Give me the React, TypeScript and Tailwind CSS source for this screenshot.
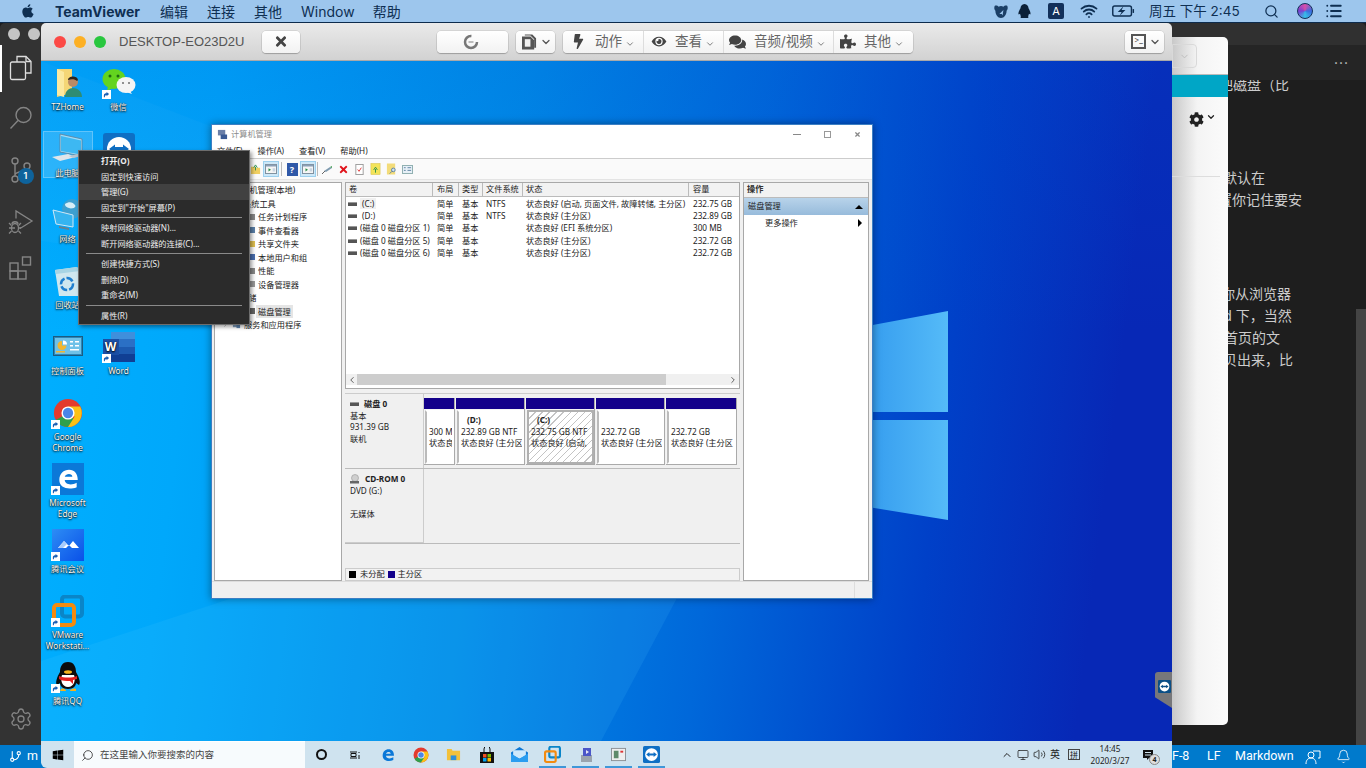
import React from 'react';
import { ChevronDown, ChevronUp, Search, Wifi, List, Bell, GitBranch, ChevronLeft, ChevronRight, Volume2, Monitor, Settings } from 'lucide-react';
import { FaBolt, FaEye, FaComments, FaPuzzlePiece, FaCog, FaTimes, FaWindows } from 'react-icons/fa';

const Shortcut = () => (
    <span className="absolute left-0 bottom-0 w-[9px] h-[9px] bg-white flex items-center justify-center">
        <svg viewBox="0 0 8 8" className="w-[7px] h-[7px]"><path d="M1 7V4.5C1 3 2.5 2.5 4 2.5V1l3 2.5L4 6V4.5C3 4.5 2.5 5 2 7Z" fill="#1a5fb4" /></svg>
    </span>
);

const FolderPerson = () => (
    <svg viewBox="0 0 32 32" className="w-[32px] h-[32px]">
        <path d="M5 2h15v24L5 30Z" fill="#f4d676" />
        <path d="M5 2l7 3v25l-7-2Z" fill="#fbe9a0" />
        <circle cx="21" cy="15" r="5" fill="#b98a66" />
        <path d="M16 13c0-4 9-5 10 0l-1 1c-2-2-6-2-9-1Z" fill="#2c2620" />
        <path d="M13 30c0-6 4-9 8-9s9 3 9 9Z" fill="#2f8c72" />
    </svg>
);

const Wechat = () => (
    <svg viewBox="0 0 34 32" className="w-[34px] h-[32px]">
        <ellipse cx="12" cy="12" rx="11.5" ry="10" fill="#63d41f" />
        <path d="M6 19l-1 5 6-3Z" fill="#63d41f" />
        <circle cx="8" cy="9" r="1.5" fill="#1f6b10" /><circle cx="16" cy="9" r="1.5" fill="#1f6b10" />
        <ellipse cx="24" cy="18" rx="9.5" ry="8" fill="#f4f4f4" />
        <path d="M28 24l2 3-6-2Z" fill="#f4f4f4" />
        <circle cx="21" cy="16" r="1.1" fill="#777" /><circle cx="27" cy="16" r="1.1" fill="#777" />
    </svg>
);

const ThisPc = () => (
    <svg viewBox="0 0 34 32" className="w-[34px] h-[32px]">
        <path d="M9 1l22 5v17L9 19Z" fill="#9fdcf8" stroke="#5f7f98" strokeWidth=".8" />
        <path d="M10 3l20 4.500v14L10 18Z" fill="#3db8f2" />
        <path d="M1 24l16-3 8 3-16 4Z" fill="#dfe5ea" />
        <path d="M18 23l9-2 4 2-9 2Z" fill="#b8c4ce" />
    </svg>
);

const TeamviewerLogo = ({ size = 'w-[32px] h-[32px]', bg = '#0e6fc4' }: { size?: string; bg?: string }) => (
    <svg viewBox="0 0 32 32" className={size}>
        <rect width="32" height="32" rx="3" fill={bg} />
        <circle cx="16" cy="16" r="12" fill="#fff" />
        <path d="M6 16l6-4.500V14h8v-2.500l6 4.500-6 4.500V18h-8v2.500Z" fill={bg} />
    </svg>
);

const NetworkIcon = () => (
    <svg viewBox="0 0 32 32" className="w-[32px] h-[32px]">
        <circle cx="20" cy="10" r="10" fill="#3d9fd0" />
        <path d="M13 5c4-3 8-2 10 1s-4 4-6 3-4-1-4-4Z" fill="#d6eef8" />
        <path d="M1 11l20 5v12L4 25Z" fill="#35b4f0" stroke="#cfe7f5" strokeWidth="1" />
        <path d="M7 27l10 2v2L7 29Z" fill="#67808f" />
    </svg>
);

const RecycleBin = () => (
    <svg viewBox="0 0 32 32" className="w-[32px] h-[32px]">
        <path d="M3 5l22-3 3 4-2 25H7Z" fill="#cfe7ef" />
        <path d="M3 5l22-3 3 4-24 3Z" fill="#a7d4e4" />
        <circle cx="15" cy="19" r="6" fill="none" stroke="#1f7fcf" strokeWidth="2.500" strokeDasharray="7 2" />
    </svg>
);

const ControlPanel = () => (
    <svg viewBox="0 0 30 22" className="w-[30px] h-[22px]">
        <rect x=".5" y=".5" width="29" height="19" fill="#2d87b8" stroke="#1c5b80" />
        <rect x="2" y="2" width="26" height="16" fill="#6ec1e8" />
        <path d="M9 5a4.500 4.500 0 1 0 4.500 4.500H9Z" fill="#f2b62f" />
        <path d="M10 4.500a4 4 0 0 1 4 4h-4Z" fill="#fff" />
        <path d="M17 5h3v1.500h-3ZM22 5h4v1.500h-4ZM17 9h3v1.500h-3ZM22 9h4v1.500h-4ZM17 13h9v1.500h-9Z" fill="#fff" />
        <path d="M3 15h9v1.500H3Z" fill="#f2b62f" />
    </svg>
);

const WordIcon = () => (
    <span className="relative w-[32px] h-[30px] block">
        <span className="absolute right-0 top-0 w-[24px] h-[30px] flex flex-col">
            <span className="flex-1 bg-[#3f8fdc]" /><span className="flex-1 bg-[#2b70c5]" /><span className="flex-1 bg-[#1d5ab0]" /><span className="flex-1 bg-[#103f94]" />
        </span>
        <span className="absolute left-0 top-[7px] w-[16px] h-[16px] bg-[#1a4fa5] text-white text-[12px] leading-[16px] font-bold text-center">W</span>
    </span>
);

const ChromeLogo = ({ size = 'w-[30px] h-[30px]' }: { size?: string }) => (
    <svg viewBox="0 0 32 32" className={size}>
        <circle cx="16" cy="16" r="15" fill="#e33b2e" />
        <path d="M16 16L3 23.500A15 15 0 0 0 16 31l7-7.500Z" fill="#2fa04c" />
        <path d="M16 9h13a15 15 0 0 1-13 22l7-11Z" fill="#fbc117" />
        <circle cx="16" cy="16" r="7" fill="#fff" />
        <circle cx="16" cy="16" r="5.500" fill="#4a86e8" />
    </svg>
);

const EdgeLogo = ({ color = '#fff' }: { color?: string }) => (
    <svg viewBox="0 0 24 24" className="w-full h-full">
        <path d="M4 13C4 7 8 3.500 13 3.500c5 0 8 3.500 8 9.500H9c0 4 6 5.500 11 2.500v4c-7 3-16 1-16-6.500Zm5-3h7c0-3.500-6-3.500-7 0Z" fill={color} />
    </svg>
);

const MeetingIcon = () => (
    <span className="relative block w-[32px] h-[32px] bg-[linear-gradient(135deg,#2d8df5,#0a50e8)]">
        <svg viewBox="0 0 32 32" className="w-full h-full">
            <path d="M6 19l6-7 5 5 4-5 6 7h-7l-3-3-3 3Z" fill="#fff" />
            <path d="M6 19l6-7 3 3-4 4Z" fill="#a9ccfb" />
        </svg>
    </span>
);

const VmwareIcon = () => (
    <svg viewBox="0 0 32 32" className="w-[32px] h-[32px]">
        <rect x="10" y="1.500" width="20" height="20" rx="3" fill="none" stroke="#0a85c8" strokeWidth="4" />
        <rect x="2" y="10" width="20" height="20" rx="3" fill="none" stroke="#f38b0f" strokeWidth="4" />
    </svg>
);

const QqIcon = () => (
    <svg viewBox="0 0 32 32" className="w-[32px] h-[32px]">
        <path d="M16 1c6 0 8 5 8 10 3 5 5 11 3 13l-3-2c0 3-3 6-8 6s-8-3-8-6l-3 2c-2-2 0-8 3-13C8 6 10 1 16 1Z" fill="#0c0c0c" />
        <path d="M10 14h12c2 5 0 12-6 12s-8-7-6-12Z" fill="#fff" />
        <ellipse cx="16" cy="11" rx="4" ry="1.800" fill="#f7b21b" />
        <path d="M7 15c5 2 13 2 18 0v3l-4 1v4l-3-3c-4 0-8 0-11-2Z" fill="#e21f1f" />
        <path d="M9 28c2-1 5 0 5 2H8ZM18 30c0-2 4-3 6-2v2Z" fill="#f7b21b" />
    </svg>
);

const desktopIcons = [
    { label: ['TZHome'], cell: 'col-start-1 row-start-1', icon: <FolderPerson /> },
    { label: ['微信'], cell: 'col-start-2 row-start-1', icon: <Wechat />, shortcut: true },
    { label: ['此电脑'], cell: 'col-start-1 row-start-2', icon: <ThisPc />, selected: true },
    { label: [], cell: 'col-start-2 row-start-2', icon: <TeamviewerLogo />, shortcut: true },
    { label: ['网络'], cell: 'col-start-1 row-start-3', icon: <NetworkIcon /> },
    { label: ['回收站'], cell: 'col-start-1 row-start-4', icon: <RecycleBin /> },
    { label: ['控制面板'], cell: 'col-start-1 row-start-5', icon: <ControlPanel /> },
    { label: ['Word'], cell: 'col-start-2 row-start-5', icon: <WordIcon />, shortcut: true },
    { label: ['Google', 'Chrome'], cell: 'col-start-1 row-start-6', icon: <ChromeLogo />, shortcut: true },
    { label: ['Microsoft', 'Edge'], cell: 'col-start-1 row-start-7', icon: <span className="block w-[32px] h-[32px] bg-[#0b78d8] p-[3px]"><EdgeLogo /></span>, shortcut: true },
    { label: ['腾讯会议'], cell: 'col-start-1 row-start-8', icon: <MeetingIcon />, shortcut: true },
    { label: ['VMware', 'Workstati...'], cell: 'col-start-1 row-start-9', icon: <VmwareIcon />, shortcut: true },
    { label: ['腾讯QQ'], cell: 'col-start-1 row-start-10', icon: <QqIcon />, shortcut: true },
];

const menuSections = [
    [{ text: '打开(O)', bold: true }, { text: '固定到快速访问' }, { text: '管理(G)', hover: true }, { text: '固定到"开始"屏幕(P)' }],
    [{ text: '映射网络驱动器(N)...' }, { text: '断开网络驱动器的连接(C)...' }],
    [{ text: '创建快捷方式(S)' }, { text: '删除(D)' }, { text: '重命名(M)' }],
    [{ text: '属性(R)' }],
];

const treeRows = [
    { text: '计算机管理(本地)', cls: 'pl-[18px]' },
    { text: '系统工具', cls: 'pl-[28px]' },
    { text: '任务计划程序', cls: 'pl-[35px]', dot: 'bg-[#888]' },
    { text: '事件查看器', cls: 'pl-[35px]', dot: 'bg-[#5a7fa8]' },
    { text: '共享文件夹', cls: 'pl-[35px]', dot: 'bg-[#e0c050]' },
    { text: '本地用户和组', cls: 'pl-[35px]', dot: 'bg-[#4a6fb0]' },
    { text: '性能', cls: 'pl-[35px]', dot: 'bg-[#888]' },
    { text: '设备管理器', cls: 'pl-[35px]', dot: 'bg-[#999]' },
    { text: '存储', cls: 'pl-[25px]' },
    { text: '磁盘管理', cls: 'pl-[35px]', dot: 'bg-[#666]', selected: true },
    { text: '服务和应用程序', cls: 'pl-[7px]', services: true },
];

const volumes = [
    { name: '(C:)', layout: '简单', type: '基本', fs: 'NTFS', status: '状态良好 (启动, 页面文件, 故障转储, 主分区)', size: '232.75 GB', indent: 'pl-[5px]', mark: true },
    { name: '(D:)', layout: '简单', type: '基本', fs: 'NTFS', status: '状态良好 (主分区)', size: '232.89 GB', indent: 'pl-[5px]' },
    { name: '(磁盘 0 磁盘分区 1)', layout: '简单', type: '基本', fs: '', status: '状态良好 (EFI 系统分区)', size: '300 MB', indent: 'pl-[3px]' },
    { name: '(磁盘 0 磁盘分区 5)', layout: '简单', type: '基本', fs: '', status: '状态良好 (主分区)', size: '232.72 GB', indent: 'pl-[3px]' },
    { name: '(磁盘 0 磁盘分区 6)', layout: '简单', type: '基本', fs: '', status: '状态良好 (主分区)', size: '232.72 GB', indent: 'pl-[3px]' },
];

const partitions = [
    { title: '', size: '300 M', status: '状态良', width: 'w-[31px]' },
    { title: '(D:)', size: '232.89 GB NTF', status: '状态良好 (主分区', width: 'w-[69px]' },
    { title: '(C:)', size: '232.75 GB NTF', status: '状态良好 (启动,', width: 'w-[69px]', active: true },
    { title: '', size: '232.72 GB', status: '状态良好 (主分区', width: 'w-[69px]' },
    { title: '', size: '232.72 GB', status: '状态良好 (主分区', width: 'w-[71px]' },
];

const VolumeGlyph = () => <span className="w-[9px] h-[4px] bg-[#555] border-t border-[#999] shrink-0" />;

const SmallBtn = ({ children, cls = '' }: { children: React.ReactNode; cls?: string }) => (
    <span className={`w-[16px] h-[16px] flex items-center justify-center shrink-0 ${cls}`}>{children}</span>
);

const PanelGlyph = () => (
    <svg viewBox="0 0 14 12" className="w-[12px] h-[10px]"><rect x=".5" y=".5" width="13" height="11" fill="#f5f5f5" stroke="#6d7f8f" /><rect x="1" y="1" width="12" height="2" fill="#8aa0b8" /><path d="M4 5v4l3-2Z" fill="#2a8f4a" /><path d="M9 5h3v4H9Z" fill="#c8d5e2" /></svg>
);

const ComputerManagement = () => (
    <div className="absolute left-[170px] top-[63px] w-[662px] h-[475px] bg-[#f0f0f0] border border-[#3c7fc4] flex flex-col text-[8.2px] text-[#222] shadow-[0_0_8px_rgba(0,0,0,0.4)] [font-family:'Noto_Sans','Noto_Sans_CJK_SC',sans-serif]">
        <div className="h-[19px] bg-white flex items-center pl-[5px] shrink-0">
            <svg viewBox="0 0 12 12" className="w-[11px] h-[11px]"><rect x="1" y="1" width="8" height="6" fill="#6a7fa8" /><rect x="4" y="6" width="7" height="5" fill="#3a5a94" /></svg>
            <span className="ml-[3px] text-[#8a8a8a]">计算机管理</span>
            <span className="ml-auto flex items-center text-[#777]">
                <span className="w-[30px] flex justify-center"><span className="w-[8px] h-px bg-[#888]" /></span>
                <span className="w-[30px] flex justify-center"><span className="w-[7px] h-[7px] border border-[#999]" /></span>
                <span className="w-[30px] flex justify-center text-[#888]"><FaTimes className="w-[7px] h-[7px]" /></span>
            </span>
        </div>
        <div className="h-[15px] bg-white flex items-center pl-[5px] gap-[15px] border-b border-[#ccc] shrink-0">
            <span>文件(F)</span><span>操作(A)</span><span>查看(V)</span><span>帮助(H)</span>
        </div>
        <div className="h-[21px] bg-[#fafafa] flex items-center pl-[4px] border-b border-[#e4e4e4] shrink-0">
            <span className="w-[31px]" />
            <SmallBtn><svg viewBox="0 0 12 12" className="w-[11px] h-[11px]"><path d="M1 3h4l1 1h5v7H1Z" fill="#f0cf62" /><path d="M6 7V3M4 4l2-3 2 3" stroke="#2a8f4a" fill="none" /></svg></SmallBtn>
            <SmallBtn cls="bg-[#cde8f8] border border-[#9cd0ee]"><PanelGlyph /></SmallBtn>
            <span className="w-px h-[14px] bg-[#bbb] mx-[2px]" />
            <SmallBtn><span className="w-[11px] h-[13px] bg-[#2f58a8] text-white text-[9px] font-bold leading-[13px] text-center">?</span></SmallBtn>
            <SmallBtn cls="bg-[#cde8f8] border border-[#9cd0ee]"><PanelGlyph /></SmallBtn>
            <span className="w-px h-[14px] bg-[#bbb] mx-[1px]" />
            <SmallBtn><svg viewBox="0 0 12 12" className="w-[12px] h-[12px]"><path d="M3 8l6-4 2 1-6 4Z" fill="#7f9bb0" /><path d="M1 11l3-3" stroke="#666" /><path d="M9 4l2-1v2Z" fill="#3a9a4a" /></svg></SmallBtn>
            <SmallBtn><FaTimes className="w-[11px] h-[11px] text-[#e0141c]" /></SmallBtn>
            <SmallBtn><svg viewBox="0 0 12 12" className="w-[11px] h-[11px]"><rect x="2" y=".5" width="8" height="11" fill="#fff" stroke="#999" /><path d="M4 6l1.500 2L8 4" stroke="#d33" fill="none" /></svg></SmallBtn>
            <SmallBtn><svg viewBox="0 0 12 12" className="w-[11px] h-[12px]"><rect x="1" width="10" height="12" fill="#f3e45a" stroke="#d4b93a" strokeWidth=".5" /><path d="M6 10V6M4 7l2-3 2 3" stroke="#2a8f4a" fill="none" /></svg></SmallBtn>
            <SmallBtn><svg viewBox="0 0 12 12" className="w-[11px] h-[12px]"><rect x="1" width="9" height="12" fill="#f3dc7a" /><circle cx="8" cy="7" r="2" fill="#cfe3f2" stroke="#5a7f9f" /><path d="M6.500 8.500L4 11" stroke="#5a7f9f" /></svg></SmallBtn>
            <SmallBtn><svg viewBox="0 0 12 10" className="w-[11px] h-[9px]"><rect x=".5" y=".5" width="11" height="9" fill="#e7f0f7" stroke="#8aa" /><path d="M2 3h2M2 6h2M6 3h4M6 6h4" stroke="#5a7f9f" /></svg></SmallBtn>
        </div>
        <div className="flex-1 flex gap-[3px] px-[2px] pt-[2px] min-h-0 bg-[#f0f0f0]">
            <div className="w-[128px] bg-white border border-[#a8a8a8] shrink-0">
                {treeRows.map((row) => (
                    <div key={row.text} className={`h-[13.5px] leading-[13.5px] whitespace-nowrap flex items-center ${row.cls}`}>
                        {row.dot && <span className={`w-[5px] h-[6px] mr-[3px] shrink-0 ${row.dot}`} />}
                        {row.services && (
                            <>
                                <ChevronRight className="w-[7px] h-[7px] text-[#888] mr-[3px]" />
                                <svg viewBox="0 0 10 10" className="w-[9px] h-[9px] mr-[3px]"><rect x="1" y="2" width="5" height="6" fill="#7f9bb8" /><rect x="5" y="4" width="4" height="5" fill="#5a7fa8" /></svg>
                            </>
                        )}
                        <span className={row.selected ? 'bg-[#e5e5e5] px-[2px] -ml-[2px] inline-block' : ''}>{row.text}</span>
                    </div>
                ))}
            </div>
            <div className="w-[395px] flex flex-col shrink-0 bg-[#f0f0f0]">
                <div className="h-[207px] bg-white border border-[#a8a8a8] flex flex-col shrink-0">
                    <div className="h-[14px] flex bg-[#f2f2f2] border-b border-[#bbb] shrink-0">
                        <span className="w-[87px] pl-[3px] border-r border-[#bbb]">卷</span>
                        <span className="w-[26px] pl-[4px] border-r border-[#bbb]">布局</span>
                        <span className="w-[24px] pl-[3px] border-r border-[#bbb]">类型</span>
                        <span className="w-[40px] pl-[3px] border-r border-[#bbb]">文件系统</span>
                        <span className="w-[166px] pl-[3px] border-r border-[#bbb]">状态</span>
                        <span className="flex-1 pl-[4px]">容量</span>
                    </div>
                    <div className="flex-1 pt-[1px]">
                        {volumes.map((v) => (
                            <div key={v.name} className="h-[12.2px] leading-[12.2px] flex items-center whitespace-nowrap">
                                <span className="w-[87px] pl-[2px] flex items-center"><VolumeGlyph /><span className={v.indent}><span className={v.mark ? 'bg-[#f0f0f0] px-[2px] -mx-[2px]' : ''}>{v.name}</span></span></span>
                                <span className="w-[26px] pl-[4px]">{v.layout}</span>
                                <span className="w-[24px] pl-[3px]">{v.type}</span>
                                <span className="w-[40px] pl-[3px]">{v.fs}</span>
                                <span className="w-[166px] pl-[3px]">{v.status}</span>
                                <span className="flex-1 pl-[4px]">{v.size}</span>
                            </div>
                        ))}
                    </div>
                    <div className="h-[11px] flex items-center mb-[3px] bg-[#f0f0f0]">
                        <ChevronLeft className="w-[10px] h-[10px] ml-[1px] text-[#444]" />
                        <span className="w-[309px] h-full bg-[#cdcdcd]" />
                        <ChevronRight className="w-[10px] h-[10px] ml-auto mr-[1px] text-[#444]" />
                    </div>
                </div>
                <div className="mt-[4px] flex-1 flex flex-col bg-[#f0f0f0] border-t border-[#ccc]">
                    <div className="h-[75px] flex border-b border-[#bbb] shrink-0">
                        <div className="w-[79px] pl-[5px] pt-[4px] bg-[#f0f0f0] border-r border-[#ccc] leading-[11.5px] shrink-0">
                            <div className="flex items-center font-bold gap-[5px]"><VolumeGlyph /><span>磁盘 0</span></div>
                            <div>基本</div><div>931.39 GB</div><div>联机</div>
                        </div>
                        <div className="flex-1 flex items-start pt-[4px] gap-[1px]">
                            {partitions.map((p, i) => (
                                <div key={i} className={`${p.width} h-[67px] flex flex-col border-r border-b border-[#aaa] shrink-0 bg-[#f4f4f4]`}>
                                    <div className="h-[11px] bg-[#13008a] shrink-0" />
                                    <div className={`flex-1 mt-[1px] ml-[1px] pl-[2px] pt-[2px] overflow-hidden whitespace-nowrap leading-[11.5px] border-2 ${p.active ? 'border-[#b0b0b0] bg-[repeating-linear-gradient(135deg,#fff_0,#fff_4px,#c4c4c4_4px,#c4c4c4_5px)]' : 'border-white border-l-[#bbb] bg-white'}`}>
                                        <div className="font-bold pl-[6px] h-[11.5px]">{p.title}</div>
                                        <div>{p.size}</div>
                                        <div>{p.status}</div>
                                    </div>
                                </div>
                            ))}
                        </div>
                    </div>
                    <div className="h-[75px] flex border-b border-[#bbb] shrink-0">
                        <div className="w-[79px] pl-[5px] pt-[4px] bg-[#f0f0f0] border-r border-b border-[#ccc] leading-[11.5px] shrink-0">
                            <div className="flex items-center font-bold gap-[5px]">
                                <svg viewBox="0 0 10 10" className="w-[10px] h-[10px]"><circle cx="5" cy="4" r="3.500" fill="#cfcfcf" stroke="#888" strokeWidth=".5" /><rect x="0" y="7" width="9" height="2.500" fill="#666" /></svg>
                                <span>CD-ROM 0</span>
                            </div>
                            <div>DVD (G:)</div><div className="h-[11.5px]" /><div>无媒体</div>
                        </div>
                    </div>
                    <div className="flex-1" />
                    <div className="h-[13px] flex items-center pl-[3px] border border-[#ccc] bg-[#f2f2f2] shrink-0">
                        <span className="w-[7px] h-[7px] bg-black mr-[4px]" /><span>未分配</span>
                        <span className="w-[7px] h-[7px] bg-[#13008a] ml-[3px] mr-[3px]" /><span>主分区</span>
                    </div>
                </div>
            </div>
            <div className="flex-1 mr-[1px] bg-white border border-[#a8a8a8] flex flex-col">
                <div className="h-[15px] pl-[3px] bg-[#f2f2f2] border-b border-[#bbb] font-bold text-[#333] shrink-0">操作</div>
                <div className="h-[17px] pl-[4px] flex items-center bg-[linear-gradient(#b8d3ea,#97bbdb)] shrink-0">
                    <span>磁盘管理</span>
                    <span className="ml-auto mr-[5px] w-0 h-0 border-x-[4px] border-x-transparent border-b-[4px] border-b-black" />
                </div>
                <div className="h-[14px] mt-[1px] pl-[21px] flex items-center">
                    <span>更多操作</span>
                    <span className="ml-auto mr-[6px] w-0 h-0 border-y-[4px] border-y-transparent border-l-[4px] border-l-black" />
                </div>
            </div>
        </div>
        <div className="h-[17px] bg-[#f0f0f0] border-t border-[#ddd] flex justify-end shrink-0"><span className="w-[18px] border-l border-[#ddd]" /></div>
    </div>
);

const ContextMenu = () => (
    <div className="absolute left-[37px] top-[89px] w-[172px] h-[175px] bg-[#2b2b2b] border border-[#999]/60 py-[2px] text-[8.2px] text-[#eee] shadow-[2px_2px_4px_rgba(0,0,0,0.4)] [font-family:'Noto_Sans','Noto_Sans_CJK_SC',sans-serif]">
        {menuSections.map((section, i) => (
            <div key={i}>
                {i > 0 && <div className="h-px bg-[#8a8a8a] mx-[7px] my-[2px]" />}
                {section.map((item: { text: string; bold?: boolean; hover?: boolean }) => (
                    <div key={item.text} className={`h-[15.5px] leading-[15.5px] pl-[22px] whitespace-nowrap ${item.bold ? 'font-bold' : ''} ${item.hover ? 'bg-[#414141]' : ''}`}>{item.text}</div>
                ))}
            </div>
        ))}
    </div>
);

const TitleButton = ({ children, cls = '' }: { children: React.ReactNode; cls?: string }) => (
    <div className={`h-[22px] flex items-center bg-[linear-gradient(#ffffff,#f2f2f2)] rounded-[4px] shadow-[0_0_0_0.5px_rgba(0,0,0,0.15),0_1px_1px_rgba(0,0,0,0.2)] shrink-0 ${cls}`}>{children}</div>
);

const groupItems = [
    { label: '动作', width: 'w-[80px]', icon: <FaBolt className="w-[13px] h-[15px] ml-[9px]" />, textCls: 'ml-[10px]' },
    { label: '查看', width: 'w-[80px]', icon: <FaEye className="w-[16px] h-[13px] ml-[7px]" />, textCls: 'ml-[8px]' },
    { label: '音频/视频', width: 'w-[110px]', icon: <FaComments className="w-[17px] h-[16px] ml-[5px]" />, textCls: 'ml-[8px]' },
    { label: '其他', width: 'w-[80px]', icon: <FaPuzzlePiece className="w-[16px] h-[15px] ml-[6px]" />, textCls: 'ml-[8px]' },
];

const TaskbarSlot = ({ children, active = false }: { children: React.ReactNode; active?: boolean }) => (
    <span className="w-[33px] h-full flex items-center justify-center relative shrink-0">
        {children}
        {active && <span className="absolute bottom-0 left-[3px] right-[3px] h-[2px] bg-[#3f97d8]" />}
    </span>
);

const App = () => {
    return (
        <div className="relative w-[1366px] h-[768px] overflow-hidden flex flex-col bg-[#1e1e1e] [font-family:'Inter','Noto_Sans_CJK_SC',sans-serif]">
            {/* mac menu bar */}
            <div className="h-[23px] shrink-0 bg-[#9dc6ed] border-b border-[#0d2b4c] flex items-center text-[14px] text-[#0f2f52]">
                <svg viewBox="0 0 24 24" className="w-[16px] h-[16px] ml-[20px]" fill="#0f2f52"><path d="M17 12.500c0-2.500 2-3.600 2.100-3.700-1.200-1.700-3-1.900-3.600-2-1.500-.2-3 .9-3.800.9s-2-.9-3.300-.9C6.700 6.900 5.200 7.800 4.300 9.200c-1.800 3.100-.5 7.700 1.300 10.200.9 1.200 1.900 2.600 3.300 2.500 1.300-.1 1.800-.8 3.400-.8s2 .8 3.400.8 2.300-1.200 3.200-2.500c1-1.400 1.400-2.800 1.400-2.900-.1 0-3.300-1.200-3.300-4ZM14.400 5c.7-.9 1.200-2.100 1.100-3.300-1 0-2.300.7-3 1.500-.7.8-1.300 2-1.100 3.200 1.100.1 2.300-.6 3-1.400Z" /></svg>
                <span className="ml-[19px] font-bold">TeamViewer</span>
                <span className="ml-[20px]">编辑</span>
                <span className="ml-[19px]">连接</span>
                <span className="ml-[19px]">其他</span>
                <span className="ml-[19px]">Window</span>
                <span className="ml-[18px]">帮助</span>
                <div className="ml-auto flex items-center h-full">
                    <svg viewBox="0 0 20 18" className="w-[16px] h-[15px]"><path d="M2 2c2-1 4 0 5 1 2-1 4-1 6 0 1-1 3-2 5-1 1 3 0 5-1 6 0 5-3 9-7 9S3 13 3 8C2 7 1 5 2 2Z" fill="#1c3f66" /><path d="M8 12l5-5-1 7-1-2Z" fill="#9dc6ed" /></svg>
                    <svg viewBox="0 0 16 18" className="w-[15px] h-[16px] ml-[8px]"><path d="M8 1c3 0 4.500 2.500 4.500 5 1.500 2.500 3 6 2 7l-1.500-1c-.5 2-1 3-1 3s1 1 0 2H4c-1-1 0-2 0-2s-.5-1-1-3l-1.500 1c-1-1 .5-4.500 2-7C3.500 3.500 5 1 8 1Z" fill="#0b2038" /></svg>
                    <span className="ml-[16px] w-[16px] h-[16px] rounded-[2px] bg-[#12305a] text-white text-[11px] leading-[16px] text-center">A</span>
                    <Wifi className="ml-[15px] w-[20px] h-[18px] text-[#0f2f52]" strokeWidth={2.4} />
                    <svg viewBox="0 0 24 12" className="ml-[13px] w-[23px] h-[12px]"><rect x=".8" y=".8" width="19.500" height="10.400" rx="2" fill="none" stroke="#0f2f52" strokeWidth="1.500" /><rect x="21.500" y="4" width="1.500" height="4" fill="#0f2f52" /><path d="M12 1L6 7h4l-2 4 6-6h-4Z" fill="#0f2f52" /></svg>
                    <span className="ml-[14px] w-[92px] text-[13.5px] whitespace-nowrap">周五 下午 2:45</span>
                    <Search className="ml-[23px] w-[15px] h-[15px] text-[#0f2f52]" strokeWidth={2} />
                    <span className="ml-[18px] w-[16px] h-[16px] rounded-full bg-[conic-gradient(#d94fa8,#3b6be0,#35c0e8,#7a3fd0,#d94fa8)] border border-[#12305a]" />
                    <List className="ml-[11px] mr-[22px] w-[20px] h-[18px] text-[#0f2f52]" strokeWidth={2.5} />
                </div>
            </div>

            {/* vscode behind everything */}
            <div className="flex-1 relative min-h-0 flex flex-col">
                <div className="flex-1 flex min-h-0">
                    <div className="w-[41px] bg-[#333333] rounded-tl-[5px] flex flex-col items-center relative shrink-0 text-[#858585]">
                        <div className="flex gap-[8px] pt-[5px] h-[22px] self-start pl-[8px]">
                            <span className="w-[12px] h-[12px] rounded-full bg-[#c4c4c4]" />
                            <span className="w-[12px] h-[12px] rounded-full bg-[#c4c4c4]" />
                        </div>
                        <span className="absolute left-0 top-[22px] w-[2px] h-[47px] bg-white" />
                        <svg viewBox="0 0 24 26" className="mt-[10px] w-[24px] h-[26px]" fill="none" stroke="#dedede" strokeWidth="1.300"><path d="M8 7V1.500h9l5 5V18h-5" /><path d="M17 1.500v5h5" /><rect x="1.500" y="7" width="15" height="17.500" rx="1.500" /></svg>
                        <svg viewBox="0 0 24 24" className="mt-[25px] w-[24px] h-[24px]" fill="none" stroke="currentColor" strokeWidth="1.400"><circle cx="14.500" cy="9" r="7.500" /><path d="M9 14.500L1.500 22.500" /></svg>
                        <div className="mt-[27px] relative">
                            <svg viewBox="0 0 24 26" className="w-[24px] h-[26px]" fill="none" stroke="currentColor" strokeWidth="1.400"><circle cx="6" cy="4" r="3" /><circle cx="6" cy="22" r="3" /><circle cx="18" cy="9" r="3" /><path d="M6 7v12M18 12c0 3-12 2-12 6" /></svg>
                            <span className="absolute left-[9px] top-[11px] w-[16px] h-[16px] rounded-full bg-[#0e639c] text-white text-[9px] font-semibold leading-[16px] text-center">1</span>
                        </div>
                        <svg viewBox="0 0 26 26" className="mt-[26px] w-[26px] h-[26px]" fill="none" stroke="currentColor" strokeWidth="1.300">
                            <path d="M8 9.500V2l16 10-12 7.500" />
                            <ellipse cx="7" cy="19" rx="3.500" ry="4.500" />
                            <path d="M4 15c0-3 6-3 6 0M3.500 19H7M1 14l2.500 2.500M13 14l-2.500 2.500M1 19h2.500M13 19h-2.500M1 24.500l2.500-2.500M13 24.500l-2.500-2.500" />
                        </svg>
                        <svg viewBox="0 0 24 24" className="mt-[21px] w-[24px] h-[24px]" fill="none" stroke="currentColor" strokeWidth="1.400"><rect x="1" y="7" width="8" height="8" /><rect x="1" y="15" width="8" height="8" /><rect x="9" y="15" width="8" height="8" /><rect x="13.500" y="1" width="8" height="8" /></svg>
                        <Settings className="mt-auto mb-[14px] w-[24px] h-[24px]" strokeWidth={1.3} />
                    </div>
                    <div className="flex-1 flex flex-col min-w-0 rounded-tr-[5px] overflow-hidden">
                        <div className="h-[22px] bg-[#303030] shrink-0" />
                        <div className="h-[35px] bg-[#252525] shrink-0 flex items-center justify-end pr-[17px] text-[#c5c5c5] text-[14px] tracking-[1px]">···</div>
                        <div className="flex-1 relative overflow-hidden bg-[#1e1e1e] text-[14px] leading-[22px] text-[#cccccc] whitespace-nowrap">
                            <div className="pl-[1178px] flex flex-col items-start -mt-[6px]">
                                <span>把磁盘（比</span>
                                <span className="mt-[71px] ml-[4px]">默认在</span>
                                <span className="-ml-[1px]">置你记住要安</span>
                                <span className="mt-[72px] ml-[2px]">你从浏览器</span>
                                <span className="-ml-[4px]">nd 下，当然</span>
                                <span className="ml-[5px]">首页的文</span>
                                <span className="ml-[4px]">贝出来，比</span>
                            </div>
                            <span className="absolute right-0 top-[229px] bottom-0 w-[10px] bg-[#444444]" />
                        </div>
                    </div>
                </div>
                <div className="h-[23px] bg-[#007acc] shrink-0 flex items-center text-white text-[12.5px] whitespace-nowrap [font-family:'Roboto',sans-serif]">
                    <GitBranch className="ml-[9px] w-[13px] h-[13px]" />
                    <span className="ml-[5px] w-[11px]">m</span>
                    <span className="ml-[1134px] w-[18px]">F-8</span>
                    <span className="ml-[17px] w-[12px]">LF</span>
                    <span className="ml-[16px] w-[56px]">Markdown</span>
                    <svg viewBox="0 0 16 16" className="ml-[14px] w-[16px] h-[16px]" fill="none" stroke="#fff" strokeWidth="1"><circle cx="6" cy="6" r="3" /><path d="M1 15c0-4 2-6 5-6s5 2 5 6M8 2h7v7h-2" /></svg>
                    <Bell className="ml-[15px] w-[15px] h-[15px]" strokeWidth={1.3} />
                </div>

                {/* browser window sticking out behind teamviewer */}
                <div className="absolute left-[1172px] top-[14px] w-[56px] h-[688px] rounded-r-[5px] overflow-hidden flex flex-col bg-[linear-gradient(to_right,#c8c8c8,#f4f4f4_45%,#fbfbfb)]">
                    <div className="h-[38px] shrink-0 pt-[7px] border-b border-[#bbb]">
                        <span className="w-[25px] h-[24px] border border-[#d9d9d9] rounded-r-[4px] flex items-center justify-center"><ChevronDown className="w-[11px] h-[11px] text-[#bbb]" /></span>
                    </div>
                    <div className="h-[22px] bg-[#00a6c6] shrink-0" />
                    <div className="h-[80px] border-b border-[#ddd] mr-[8px] shrink-0 pt-[15px] pl-[17px] flex items-start text-[#222]">
                        <FaCog className="w-[15px] h-[15px]" />
                        <ChevronDown className="w-[10px] h-[10px] ml-[2px]" strokeWidth={3} />
                    </div>
                </div>

                {/* teamviewer window */}
                <div className="absolute left-[41px] top-0 bottom-0 w-[1131px] flex flex-col rounded-t-[5px] overflow-hidden rounded-bl-[6px]">
                    <div className="h-[38px] shrink-0 bg-[linear-gradient(#eaeaea,#d2d2d2)] border-b border-[#a9a9a9] flex items-center pl-[13px] text-[#666]">
                        <span className="w-[12px] h-[12px] rounded-full bg-[#fc4a46]" />
                        <span className="w-[12px] h-[12px] rounded-full bg-[#fdb024] ml-[8px]" />
                        <span className="w-[12px] h-[12px] rounded-full bg-[#29c73f] ml-[8px]" />
                        <span className="ml-[13px] w-[143px] text-[13px] text-[#555] whitespace-nowrap [font-family:'Liberation_Sans',sans-serif]">DESKTOP-EO23D2U</span>
                        <TitleButton cls="w-[38px] justify-center"><FaTimes className="w-[14px] h-[15px] text-[#444]" /></TitleButton>
                        <TitleButton cls="w-[71px] ml-[137px] justify-center">
                            <svg viewBox="0 0 16 16" className="w-[16px] h-[16px] mr-[3px]"><circle cx="8" cy="8" r="6" fill="none" stroke="#777" strokeWidth="2.500" strokeDasharray="28 10" /><rect x="5.500" y="7" width="5" height="2" fill="#bbb" /></svg>
                        </TitleButton>
                        <TitleButton cls="w-[39px] ml-[8px] pl-[6px]">
                            <svg viewBox="0 0 16 16" className="w-[15px] h-[16px] text-[#555]"><path d="M0 2h9l4 4v10H0Z" fill="#555" /><path d="M3 0h8l4 4v10h-2V5L9 1H3Z" fill="#555" /><rect x="3" y="5" width="6" height="8" fill="#f2f2f2" /></svg>
                            <ChevronDown className="w-[12px] h-[12px] ml-[3px] text-[#555]" strokeWidth={2.5} />
                        </TitleButton>
                        <TitleButton cls="w-[350px] ml-[8px] text-[13.5px]">
                            {groupItems.map((item, i) => (
                                <div key={item.label} className={`${item.width} h-full flex items-center ${i > 0 ? 'border-l border-[#ddd]' : ''}`}>
                                    <span className="text-[#444] flex">{item.icon}</span>
                                    <span className={`${item.textCls} text-[#666] whitespace-nowrap`}>{item.label}</span>
                                    <ChevronDown className="w-[10px] h-[10px] ml-[3px] mt-[4px] text-[#666]" />
                                </div>
                            ))}
                        </TitleButton>
                        <TitleButton cls="w-[39px] ml-auto mr-[8px] pl-[6px]">
                            <span className="w-[15px] h-[15px] border-[2px] border-[#555] text-[8px] text-[#444] leading-[8px] pl-px">{'>_'}</span>
                            <ChevronDown className="w-[12px] h-[12px] ml-[3px] text-[#555]" strokeWidth={2.5} />
                        </TitleButton>
                    </div>

                    <div className="flex-1 relative overflow-hidden bg-[linear-gradient(97deg,#00b0ff_0%,#00a8fb_15%,#008ce8_40%,#0068da_60%,#0040c8_78%,#0728b6_92%)]">
                        <svg viewBox="0 0 1131 680" className="absolute inset-0 w-full h-full">
                            <defs>
                                <linearGradient id="pane" gradientUnits="userSpaceOnUse" x1="731" y1="0" x2="907" y2="0"><stop offset="0" stopColor="#0f78e4" /><stop offset="1" stopColor="#55bbf8" /></linearGradient>
                                <linearGradient id="top" x1="0" y1="0" x2="0" y2="1"><stop offset="0" stopColor="#0050d0" stopOpacity=".18" /><stop offset=".4" stopColor="#0050d0" stopOpacity="0" /></linearGradient>
                            </defs>
                            <rect width="1131" height="680" fill="url(#top)" />
                            <path d="M0 0L730 280 0 180Z" fill="#fff" opacity=".025" />
                            <path d="M730 360L0 600V680H560Z" fill="#4fd0ff" opacity=".12" />
                            <path d="M731 283L814 269V351H731Z" fill="url(#pane)" />
                            <path d="M821 266L907 250V351H821Z" fill="url(#pane)" />
                            <path d="M731 359H814V444L731 431Z" fill="url(#pane)" />
                            <path d="M821 359H907V459L821 445Z" fill="url(#pane)" />
                        </svg>

                        <div className="relative grid grid-cols-[51px_51px] auto-rows-[66px] pl-[1px] pt-[5px] text-[8.2px] leading-[11px] text-white text-center [font-family:'Noto_Sans','Noto_Sans_CJK_SC',sans-serif] [text-shadow:0_1px_2px_#000,0_0_1px_#000]">
                            {desktopIcons.map((item) => (
                                <div key={item.cell} className={`flex flex-col items-center ${item.cell}`}>
                                    <div className={`w-[50px] flex flex-col items-center ${item.selected ? 'bg-white/15 border border-white/25 h-[47px] -mt-[1px]' : ''}`}>
                                        <div className="relative w-[34px] h-[33px] flex items-center justify-center shrink-0">
                                            {item.icon}
                                            {item.shortcut && <Shortcut />}
                                        </div>
                                        <div className="mt-[2px] whitespace-nowrap">
                                            {item.label.map((line) => <div key={line}>{line}</div>)}
                                        </div>
                                    </div>
                                </div>
                            ))}
                        </div>

                        <ComputerManagement />
                        <ContextMenu />

                        <div className="absolute right-0 top-[611px] w-[17px] h-[36px] bg-[#77777a] rounded-tl-[3px] [clip-path:polygon(0_0,100%_0,100%_100%,0_70%)] flex items-start justify-end pt-[8px] pr-[1px]">
                            <TeamviewerLogo size="w-[13px] h-[13px]" bg="#0b4f86" />
                        </div>
                    </div>

                    <div className="h-[27px] shrink-0 bg-[#cfe3ef] flex items-center text-[#222] text-[8.2px] [font-family:'Noto_Sans','Noto_Sans_CJK_SC',sans-serif]">
                        <span className="w-[33px] flex justify-center shrink-0"><FaWindows className="w-[12px] h-[12px] text-black" /></span>
                        <div className="w-[231px] h-full bg-[#f7fbfd] flex items-center pl-[7px] shrink-0 border-t border-white">
                            <Search className="w-[13px] h-[13px] scale-x-[-1]" strokeWidth={1.4} />
                            <span className="ml-[6px] text-[9.5px] text-[#444]">在这里输入你要搜索的内容</span>
                        </div>
                        <TaskbarSlot><span className="w-[11px] h-[11px] rounded-full border-[2px] border-[#111]" /></TaskbarSlot>
                        <TaskbarSlot><svg viewBox="0 0 12 12" className="w-[12px] h-[12px]"><path d="M1 3h7M1 9h7M2 4.500h5v3H2ZM10 3v1M10 6v4" stroke="#111" fill="none" /></svg></TaskbarSlot>
                        <TaskbarSlot><span className="w-[16px] h-[16px] block"><EdgeLogo color="#0b78d8" /></span></TaskbarSlot>
                        <TaskbarSlot><ChromeLogo size="w-[16px] h-[16px]" /></TaskbarSlot>
                        <TaskbarSlot><svg viewBox="0 0 16 16" className="w-[15px] h-[15px]"><path d="M1 2h5l1 2h8v10H1Z" fill="#f3c13a" /><rect x="5" y="9" width="6" height="5" fill="#2f8fd8" /></svg></TaskbarSlot>
                        <TaskbarSlot><svg viewBox="0 0 16 16" className="w-[16px] h-[16px]"><path d="M1 5h14v11H1Z" fill="#111" /><path d="M5 5V2a3 3 0 0 1 6 0v3" stroke="#111" fill="none" /><rect x="4" y="7" width="3.500" height="3.500" fill="#f25022" /><rect x="8.500" y="7" width="3.500" height="3.500" fill="#7fba00" /><rect x="4" y="11" width="3.500" height="3.500" fill="#00a4ef" /><rect x="8.500" y="11" width="3.500" height="3.500" fill="#ffb900" /></svg></TaskbarSlot>
                        <TaskbarSlot><svg viewBox="0 0 16 16" className="w-[17px] h-[17px]"><path d="M0 6l8-5 8 5v9H0Z" fill="#0f78d4" /><path d="M2 4h12v5l-6 3-6-3Z" fill="#cfe9fb" /><path d="M0 7l8 5 8-5v8H0Z" fill="#2a9df0" /></svg></TaskbarSlot>
                        <TaskbarSlot active><svg viewBox="0 0 32 32" className="w-[17px] h-[17px]"><rect x="10" y="1.500" width="20" height="20" rx="3" fill="none" stroke="#0a85c8" strokeWidth="4" /><rect x="2" y="10" width="20" height="20" rx="3" fill="none" stroke="#f38b0f" strokeWidth="4" /></svg></TaskbarSlot>
                        <TaskbarSlot active><svg viewBox="0 0 16 16" className="w-[16px] h-[16px]"><rect x="3" y="8" width="11" height="7" fill="#9aa4ae" /><rect x="5" y="1" width="8" height="8" fill="#4a56c8" /><path d="M8 3l3 2-3 2Z" fill="#e6e6f5" /></svg></TaskbarSlot>
                        <TaskbarSlot active><svg viewBox="0 0 16 16" className="w-[15px] h-[15px]"><rect x=".5" y="1.500" width="15" height="13" fill="#eee" stroke="#8a8f94" /><rect x="3" y="4" width="5" height="8" fill="#5f8a6a" /><rect x="10" y="4" width="3" height="2" fill="#d33" /></svg></TaskbarSlot>
                        <TaskbarSlot active><TeamviewerLogo size="w-[17px] h-[17px]" /></TaskbarSlot>
                        <div className="ml-auto flex items-center h-full text-[#222]">
                            <ChevronUp className="w-[12px] h-[12px]" />
                            <Monitor className="ml-[4px] w-[12px] h-[12px]" strokeWidth={1.5} />
                            <Volume2 className="ml-[4px] w-[13px] h-[13px]" strokeWidth={1.5} />
                            <span className="ml-[4px] text-[10px]">英</span>
                            <span className="ml-[8px] w-[12px] h-[11px] border border-[#444] text-[8px] leading-[9px] text-center">拼</span>
                            <div className="ml-[4px] w-[52px] text-center text-[8.2px] leading-[12px]">
                                <div>14:45</div><div>2020/3/27</div>
                            </div>
                            <div className="relative w-[36px] h-full flex items-center pl-[6px]">
                                <svg viewBox="0 0 12 12" className="w-[12px] h-[12px]"><path d="M1 1h10v8H7L5 11V9H1Z" fill="#111" /><path d="M3 3.500h6M3 6h6" stroke="#cfe3ef" /></svg>
                                <span className="absolute left-[13px] top-[13px] w-[11px] h-[11px] rounded-full bg-[#ddd] border border-[#888] text-[7px] leading-[9px] text-center font-bold">4</span>
                            </div>
                        </div>
                    </div>
                </div>
            </div>
        </div>
    );
};

export default App;
